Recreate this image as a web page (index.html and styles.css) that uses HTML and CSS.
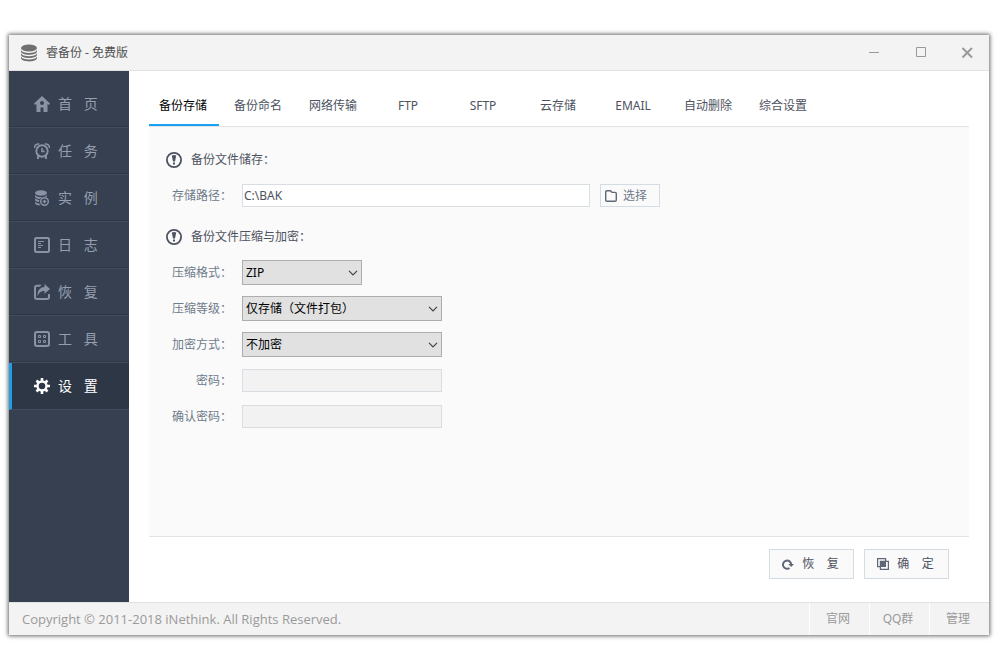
FILE: index.html
```
<!DOCTYPE html>
<html lang="zh-CN">
<head>
<meta charset="utf-8">
<meta name="viewport" content="width=device-width, initial-scale=1">
<title>睿备份 - 免费版</title>
<link rel="stylesheet" href="styles.css">
</head>
<body>
<div class="window">
  <header class="titlebar">
    <svg class="app-icon" viewBox="0 0 18 18" fill="#707070"><ellipse cx="9" cy="4" rx="8" ry="3.500"/><path d="M1 6c1 2.200 4 3 8 3s7-.8 8-3v1.600c0 2-3.500 3.200-8 3.200S1 9.600 1 7.600zM1 9.300c1 2.200 4 3 8 3s7-.8 8-3v1.500c0 2-3.500 3.200-8 3.200s-8-1.200-8-3.200zM1 12.500c1 2.200 4 3 8 3s7-.8 8-3V14c0 2-3.500 3.400-8 3.400S1 16 1 14z"/></svg>
    <h1 class="title">睿备份 - 免费版</h1>
    <div class="controls">
      <button class="control" type="button" aria-label="最小化"><svg viewBox="0 0 16 16"><path d="M4 7.500h10"/></svg></button>
      <button class="control" type="button" aria-label="最大化"><svg viewBox="0 0 16 16"><path d="M4.500 2.500h9v9h-9z"/></svg></button>
      <button class="control control-close" type="button" aria-label="关闭"><svg viewBox="0 0 16 16"><path d="M3.500 3l9.500 9.500M13 3l-9.500 9.500"/></svg></button>
    </div>
  </header>

  <div class="body">
    <nav class="sidebar">
      <a class="nav-item" href="#"><svg viewBox="0 0 16 16" fill="currentColor"><path fill-rule="evenodd" d="M8 0l8 7.500-1 1.500-1.500-1V16H9.500v-4.500h-3V16h-4V8L1 9 0 7.500zM8 5a2 2 0 1 0 0 4 2 2 0 0 0 0-4z"/></svg><span>首&nbsp;&nbsp;&nbsp;页</span></a>
      <a class="nav-item" href="#"><svg viewBox="0 0 16 16" fill="none" stroke="currentColor" stroke-width="1.900"><circle cx="8" cy="8" r="5.700"/><path stroke-width="1.500" d="M.8 5C.3 2.500 2.500.5 5.300 1M15.200 5C15.700 2.500 13.500.5 10.700 1"/><path d="M4 12.500V16M12 12.500V16"/><path stroke-width="1.600" d="M8 5v3.400h2.600"/></svg><span>任&nbsp;&nbsp;&nbsp;务</span></a>
      <a class="nav-item" href="#"><svg viewBox="0 0 16 16" fill="currentColor"><ellipse cx="7" cy="3" rx="6" ry="2.800"/><path d="M1 5c1.500 1.800 4 2 6 2s4.500-.3 6-2v1.700h-2.200c-2 0-3.800.8-4.800 2.300-2.500-.1-5-.8-5-2.500zM1 8.300c1 1.200 2.700 1.500 4.400 1.600L5 12c-2.300-.2-4-1-4-2.300zM1 11.700c1 1.100 2.500 1.500 4.200 1.600L6 15.500c-3-.1-5-1-5-2.400z"/><circle cx="10.500" cy="11.500" r="3.800" fill="none" stroke="currentColor" stroke-width="1.500"/><path d="M10.500 9.800v3.400M8.800 11.500h3.400" stroke="currentColor" stroke-width="1.400"/></svg><span>实&nbsp;&nbsp;&nbsp;例</span></a>
      <a class="nav-item" href="#"><svg viewBox="0 0 16 16" fill="none" stroke="currentColor"><rect x="1" y="1" width="14" height="14" rx="1.500" stroke-width="2"/><path d="M4 4.500h6M4 6.500h3M4 8.500h5M4 10.500h3"/></svg><span>日&nbsp;&nbsp;&nbsp;志</span></a>
      <a class="nav-item" href="#"><svg viewBox="0 0 16 16" fill="currentColor"><path d="M7.500.8H3q-3 0-3 3V13q0 3 3 3h10q3 0 3-3v-3h-2v3q0 1-1 1H3q-1 0-1-1V3.800q0-1 1-1h3z"/><path d="M10.500 0L16 5l-5.500 4.800V7C7 7 5 8.500 3.500 12.300 3.200 7 5.500 3.300 10.500 3z"/></svg><span>恢&nbsp;&nbsp;&nbsp;复</span></a>
      <a class="nav-item" href="#"><svg viewBox="0 0 16 16" fill="none" stroke="currentColor"><rect x="1" y="1" width="14" height="14" rx="2" stroke-width="2"/><path d="M4.500 4.500h2v2h-2zM9.500 4.500h2v2h-2zM4.500 9.500h2v2h-2zM9.500 9.500h2v2h-2z"/></svg><span>工&nbsp;&nbsp;&nbsp;具</span></a>
      <a class="nav-item nav-active" href="#" aria-current="page"><svg viewBox="0 0 16 16" fill="none" stroke="currentColor"><circle cx="8" cy="8" r="4.500" stroke-width="2.400"/><path stroke-width="2.600" d="M8 0v3M8 13v3M0 8h3M13 8h3M2.500 2.500l2 2M11.500 11.500l2 2M2.500 13.500l2-2M11.500 4.500l2-2"/></svg><span>设&nbsp;&nbsp;&nbsp;置</span></a>
    </nav>

    <main class="main">
      <div class="tabs" role="tablist">
        <button class="tab tab-active" type="button" role="tab" aria-selected="true">备份存储</button>
        <button class="tab" type="button" role="tab">备份命名</button>
        <button class="tab" type="button" role="tab">网络传输</button>
        <button class="tab" type="button" role="tab">FTP</button>
        <button class="tab" type="button" role="tab">SFTP</button>
        <button class="tab" type="button" role="tab">云存储</button>
        <button class="tab" type="button" role="tab">EMAIL</button>
        <button class="tab" type="button" role="tab">自动删除</button>
        <button class="tab" type="button" role="tab">综合设置</button>
      </div>

      <form class="panel" id="settings">
        <h2 class="heading"><svg viewBox="0 0 16 16"><circle cx="8" cy="8" r="7.100" fill="none" stroke="currentColor" stroke-width="1.800"/><path fill="currentColor" d="M5.800 3.500q2.200-1.200 4.400 0L9 9.500H7zM7 10.500h2v2H7z"/></svg>备份文件储存：</h2>
        <div class="row">
          <label for="path">存储路径：</label>
          <input class="field field-path" id="path" type="text" value="C:\BAK">
          <button class="button button-small" type="button"><svg viewBox="0 0 12 12" fill="none" stroke="currentColor" stroke-width="1.400"><path d="M2 .7h3.500L7 2.400h3q1.300 0 1.300 1.200v6.500q0 1.200-1.300 1.200H2q-1.300 0-1.300-1.200V2Q.7.7 2 .7z"/></svg>选择</button>
        </div>

        <h2 class="heading heading-next"><svg viewBox="0 0 16 16"><circle cx="8" cy="8" r="7.100" fill="none" stroke="currentColor" stroke-width="1.800"/><path fill="currentColor" d="M5.800 3.500q2.200-1.200 4.400 0L9 9.500H7zM7 10.500h2v2H7z"/></svg>备份文件压缩与加密：</h2>
        <div class="row">
          <label for="format">压缩格式：</label>
          <span class="select-wrap select-short"><select class="select" id="format"><option>ZIP</option></select><svg viewBox="0 0 10 6"><path d="M1 .8l4 4 4-4"/></svg></span>
        </div>
        <div class="row">
          <label for="level">压缩等级：</label>
          <span class="select-wrap"><select class="select" id="level"><option>仅存储（文件打包）</option></select><svg viewBox="0 0 10 6"><path d="M1 .8l4 4 4-4"/></svg></span>
        </div>
        <div class="row">
          <label for="method">加密方式：</label>
          <span class="select-wrap"><select class="select" id="method"><option>不加密</option></select><svg viewBox="0 0 10 6"><path d="M1 .8l4 4 4-4"/></svg></span>
        </div>
        <div class="row">
          <label for="password">密码：</label>
          <input class="field" id="password" type="password" disabled>
        </div>
        <div class="row">
          <label for="confirm">确认密码：</label>
          <input class="field" id="confirm" type="password" disabled>
        </div>
      </form>

      <div class="actions">
        <button class="button" type="reset" form="settings"><svg viewBox="0 0 12 12" fill="none" stroke="currentColor" stroke-width="2"><path d="M7.500 10A4.100 4.100 0 1 1 9.200 6.500"/><path d="M6.300 6H12L9.200 9z" fill="currentColor" stroke="none"/></svg><span>恢&nbsp;&nbsp;&nbsp;&nbsp;复</span></button>
        <button class="button" type="submit" form="settings"><svg viewBox="0 0 12 12" fill="none" stroke="currentColor" stroke-width="1.200"><path d="M8.600 3V.6h-8v8H3"/><path d="M3.400 3.400h8v8h-8z"/><path d="M3 3h6v6H3z" fill="currentColor" stroke="none"/></svg><span>确&nbsp;&nbsp;&nbsp;&nbsp;定</span></button>
      </div>
    </main>
  </div>

  <footer class="footer">
    <p class="copyright">Copyright © 2011-2018 iNethink. All Rights Reserved.</p>
    <a class="footer-link" href="#">官网</a>
    <a class="footer-link" href="#">QQ群</a>
    <a class="footer-link" href="#">管理</a>
  </footer>
</div>
</body>
</html>
```
FILE: styles.css
```
* {
  box-sizing: border-box;
}

body {
  display: flex;
  flex-direction: column;
  min-height: 100vh;
  margin: 0;
  padding: 35px 11px 31px 9px;
  background: #fff;
  color: #4d5260;
  font: 12px/18px "Noto Sans", "Noto Sans CJK SC", sans-serif;
}

button, input, select {
  margin: 0;
  font: inherit;
  color: inherit;
}

h1, h2, p {
  margin: 0;
  font: inherit;
}

a {
  color: inherit;
  text-decoration: none;
}

.window {
  display: flex;
  flex: 1;
  flex-direction: column;
  background: #fff;
  box-shadow: 0 0 4px 1px rgba(0, 0, 0, 0.6);
}

.titlebar {
  display: flex;
  align-items: center;
  height: 36px;
  padding-left: 11px;
  border-bottom: 1px solid #e1e1e1;
  background: #f3f3f3;
}

.app-icon {
  width: 18px;
  height: 18px;
}

.title {
  margin-left: 8px;
  padding-top: 1px;
  color: #505050;
}

.controls {
  display: flex;
  gap: 3px;
  margin-left: auto;
}

.control {
  display: grid;
  place-items: center;
  width: 44px;
  height: 35px;
  padding: 0;
  border: 0;
  background: none;
}

.control svg {
  width: 16px;
  height: 16px;
  fill: none;
  stroke: #999;
}

.control-close svg {
  stroke-width: 2;
}

.body {
  display: flex;
  flex: 1;
}

.sidebar {
  flex: 0 0 120px;
  padding-top: 10px;
  background: #364051;
}

.nav-item {
  display: flex;
  align-items: center;
  gap: 8px;
  height: 47px;
  padding-left: 25px;
  border-bottom: 1px solid #414d5f;
  box-shadow: inset 0 -1px #2e3746;
  color: #949eae;
  font: 14px/20px "Liberation Sans", "Noto Sans CJK SC", sans-serif;
}

.nav-item svg {
  width: 16px;
  height: 16px;
  color: #8993a5;
}

.nav-active {
  padding-left: 22px;
  border-left: 3px solid #1e9fe8;
  background: #2e3746;
  color: #fff;
}

.nav-active svg {
  color: #fff;
}

.main {
  display: flex;
  flex: 1;
  flex-direction: column;
  min-width: 0;
  padding: 0 20px;
}

.tabs {
  display: flex;
  gap: 5px;
  height: 55px;
  padding-top: 16px;
}

.tab {
  width: 70px;
  padding: 0 2px 0 0;
  border: 0;
  border-bottom: 2px solid transparent;
  background: none;
}

.tab-active {
  border-color: #1aa0f5;
  color: #000;
}

.panel {
  flex: 1;
  padding: 21px 17px;
  border: solid #e1e3e5;
  border-width: 1px 0;
  background: #fafafa;
}

.heading {
  display: flex;
  align-items: center;
  gap: 9px;
  height: 24px;
}

.heading svg {
  width: 16px;
  height: 16px;
}

.heading-next {
  margin-top: 17px;
}

.row {
  display: flex;
  align-items: center;
  gap: 10px;
  height: 25px;
  margin-top: 11px;
}

.row label {
  width: 66px;
  color: #6f7a8a;
  text-align: right;
}

.field {
  width: 200px;
  height: 23px;
  padding: 0 1px;
  border: 1px solid #d9dee3;
  border-radius: 0;
  background: #fff;
}

.field:disabled {
  background: #f2f2f2;
}

.field-path {
  width: 348px;
}

.select-wrap {
  display: grid;
  align-items: center;
  width: 200px;
}

.select-short {
  width: 120px;
}

.select-wrap > * {
  grid-area: 1 / 1;
}

.select-wrap svg {
  justify-self: end;
  width: 10px;
  height: 6px;
  margin-right: 4px;
  fill: none;
  stroke: #444;
  stroke-width: 1.2;
  pointer-events: none;
}

.select {
  appearance: none;
  width: 100%;
  height: 25px;
  padding: 0 20px 0 3px;
  border: 1px solid #adadad;
  border-radius: 0;
  background: #e1e1e1;
  color: #000;
}

.button {
  display: flex;
  align-items: center;
  justify-content: center;
  gap: 8px;
  min-width: 85px;
  height: 30px;
  padding: 0 2px 0 0;
  border: 1px solid #d3dce2;
  background: #fafafa;
}

.button svg {
  width: 12px;
  height: 12px;
  color: #606775;
}

.button-small {
  justify-content: flex-start;
  gap: 6px;
  min-width: 60px;
  height: 23px;
  padding-left: 4px;
  color: #6f7a8a;
}

.actions {
  display: flex;
  justify-content: flex-end;
  gap: 10px;
  height: 65px;
  padding: 12px 20px 0;
}

.footer {
  display: flex;
  height: 33px;
  border-top: 1px solid #e1e1e1;
  background: #f3f3f3;
  color: #9a9a9a;
  line-height: 32px;
}

.copyright {
  flex: 1;
  padding-left: 13px;
  font-family: "Open Sans", "Noto Sans", sans-serif;
  font-size: 13px;
}

.footer-link {
  width: 60px;
  padding-right: 3px;
  border-left: 1px solid #fff;
  text-align: center;
}
```
